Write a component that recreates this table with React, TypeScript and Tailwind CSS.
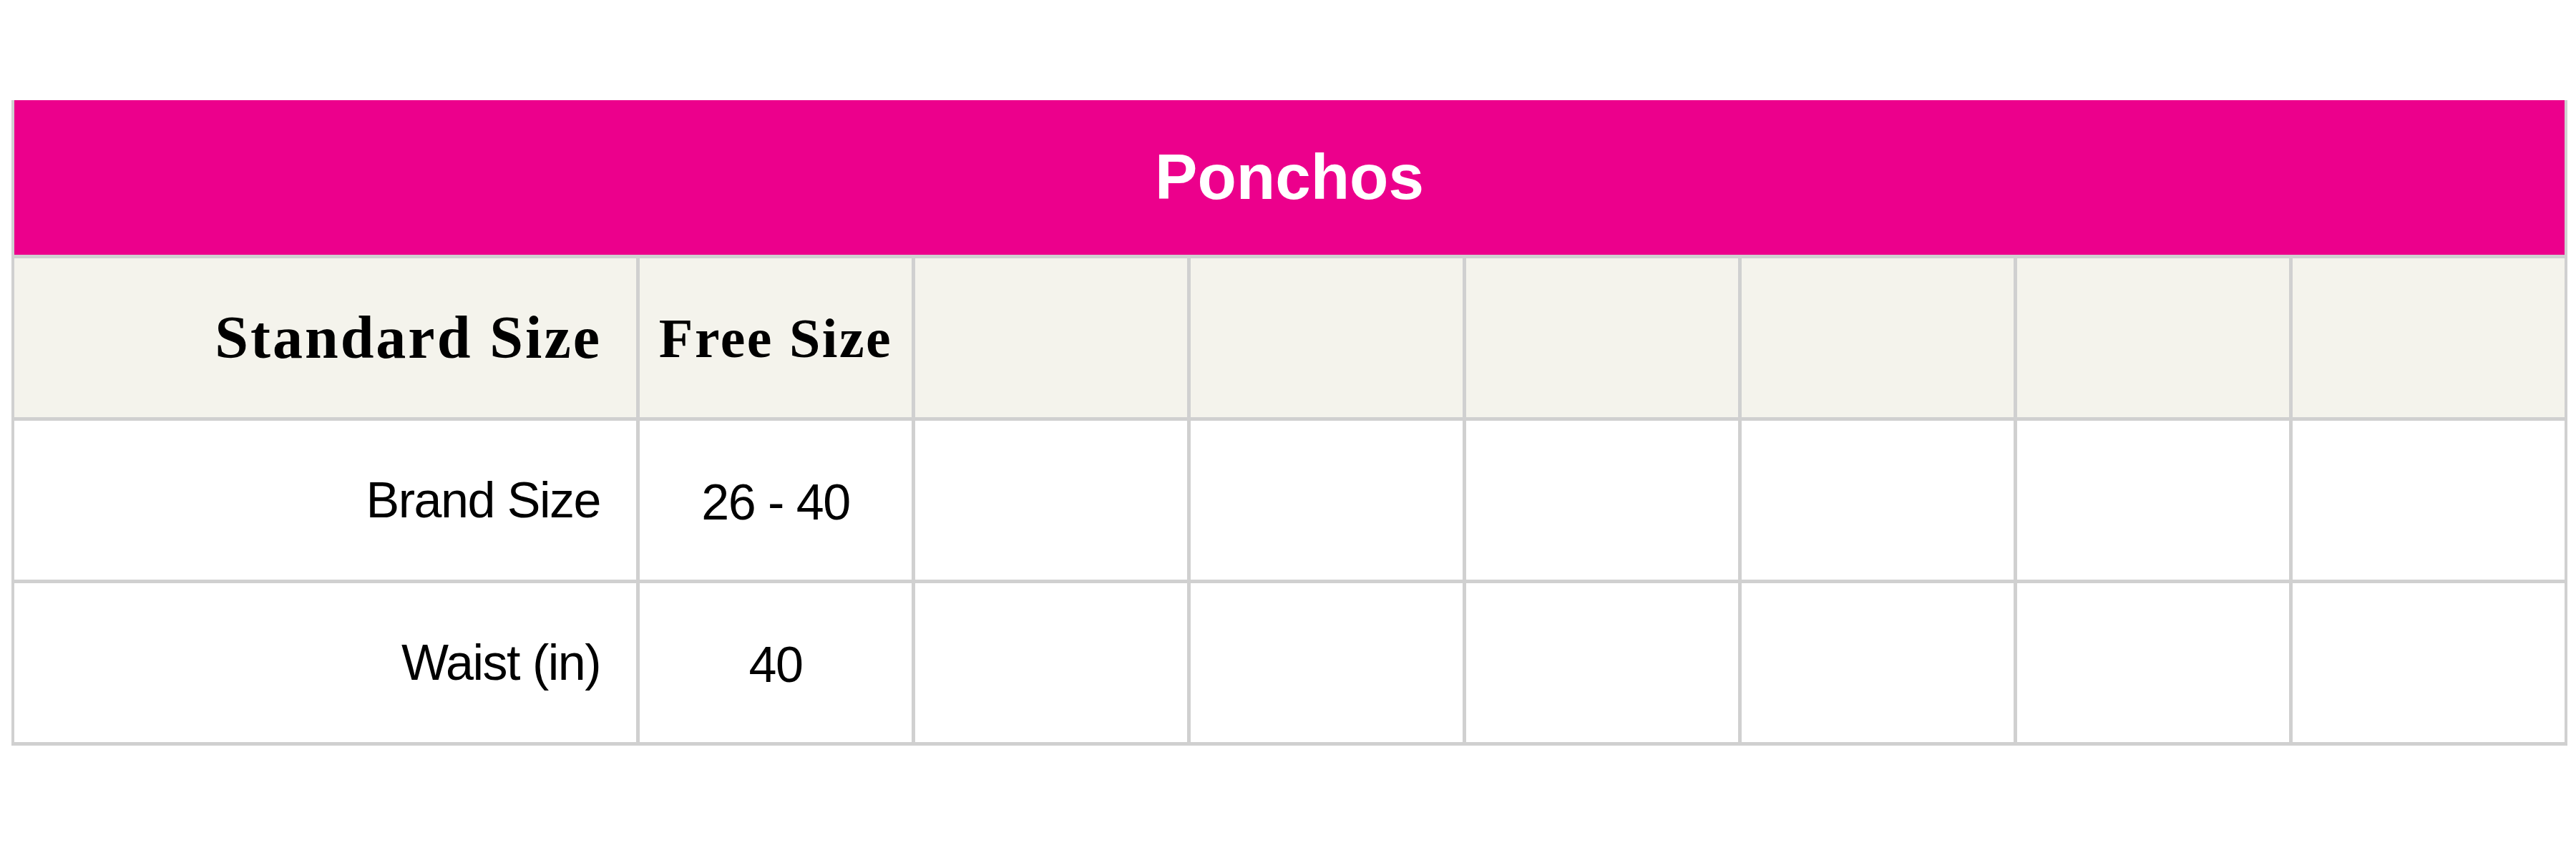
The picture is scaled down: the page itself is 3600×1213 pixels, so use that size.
const sans = { fontFamily: '"Liberation Sans", Arial, sans-serif' };
const serif = { fontFamily: '"Liberation Serif", "Times New Roman", serif' };

const rows = [
  { label: "Brand Size", value: "26 - 40" },
  { label: "Waist (in)", value: "40" },
];

const emptyCols = [0, 1, 2, 3, 4, 5];

export default function App() {
  return (
    <div className="min-h-[1213px] w-[3600px] bg-white pt-[140px]">
      <div className="ml-[16px] w-[3572px] border-x-4 border-b-[5px] border-[#d0d0d0] bg-[#d0d0d0]">
        <div
          className="flex h-[216px] items-center justify-center bg-[#ec008c] text-[89px] font-bold text-white"
          style={sans}
        >
          Ponchos
        </div>

        <div className="grid grid-cols-[869px_repeat(7,380px)] grid-rows-[repeat(3,222px)] gap-[5px] pt-[5px]">
          {/* header row */}
          <div
            className="flex items-center justify-end bg-[#f4f3ec] pr-[48px] text-[84px] font-bold tracking-[3px] text-black"
            style={serif}
          >
            Standard Size
          </div>
          <div
            className="flex items-center justify-center bg-[#f4f3ec] text-[78px] font-bold tracking-[2.5px] text-black"
            style={serif}
          >
            Free Size
          </div>
          {emptyCols.map((c) => (
            <div key={"h" + c} className="bg-[#f4f3ec]" />
          ))}

          {rows.map((row) => (
            <div key={row.label} className="contents">
              <div
                className="flex items-center justify-end bg-white pr-[50px] text-[70px] tracking-[-1.5px] text-black"
                style={sans}
              >
                {row.label}
              </div>
              <div
                className="flex items-center justify-center bg-white pt-[6px] text-[70px] tracking-[-1.5px] text-black"
                style={sans}
              >
                {row.value}
              </div>
              {emptyCols.map((c) => (
                <div key={row.label + c} className="bg-white" />
              ))}
            </div>
          ))}
        </div>
      </div>
    </div>
  );
}
